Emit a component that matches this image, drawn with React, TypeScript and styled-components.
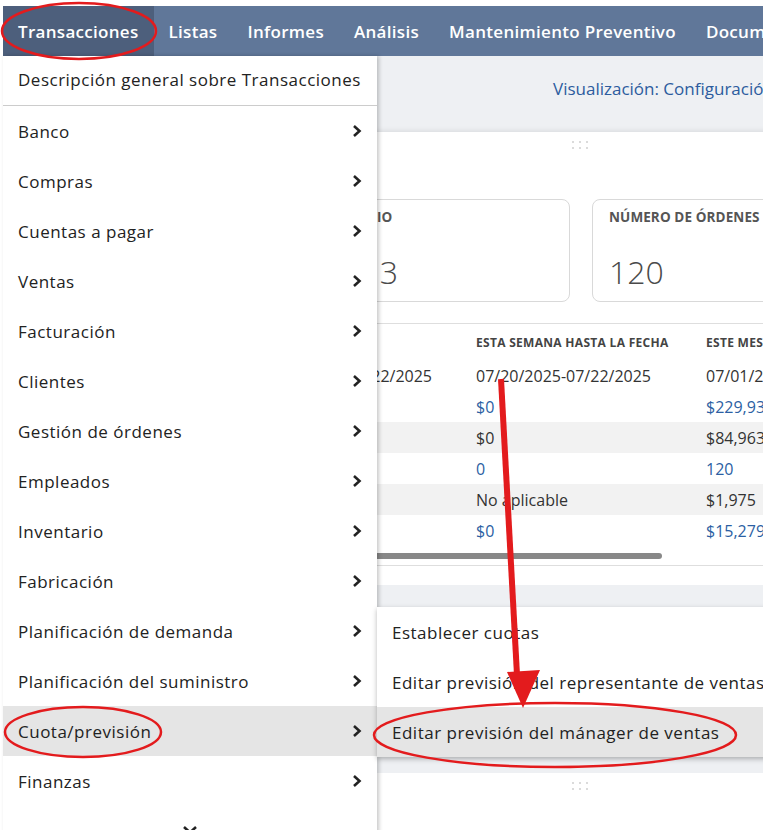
import React from 'react'
import styled, { createGlobalStyle } from 'styled-components'

const GlobalStyle = createGlobalStyle`
  html, body {
    margin: 0;
    padding: 0;
    background: #ffffff;
  }
  body {
    font-family: 'Open Sans', 'Noto Sans', sans-serif;
    color: #222222;
  }
`

const Page = styled.div`
  position: relative;
  width: 763px;
  height: 830px;
  overflow: hidden;
  padding: 6px 0 0 3px;
  box-sizing: border-box;
`

const NavBar = styled.nav`
  display: flex;
  height: 50px;
  width: 1200px;
  background: #607799;
`

const NavItem = styled.div<{ $active?: boolean }>`
  display: flex;
  align-items: center;
  padding: 0 15px;
  color: #ffffff;
  font-size: 17px;
  font-weight: 600;
  letter-spacing: 0.3px;
  white-space: nowrap;
  background: ${(p) => (p.$active ? '#4d5f7c' : 'transparent')};
`

const Content = styled.div`
  width: 1154px;
  background: #eef0f3;
`

const ViewBar = styled.div`
  height: 76px;
  display: flex;
  align-items: center;
  padding: 0 0 12px 550px;
  box-sizing: border-box;
  color: #2c5c9e;
  font-size: 17px;
  white-space: nowrap;
  box-shadow: inset 0 -6px 6px -6px rgba(0, 0, 0, 0.12);
`

const Panel = styled.section`
  background: #ffffff;
  position: relative;
`

const DragHandle = styled.div`
  display: grid;
  grid-template-columns: repeat(3, 2px);
  grid-auto-rows: 2px;
  column-gap: 5px;
  row-gap: 4px;
  justify-content: center;
  padding-top: 9px;
  span {
    background: #cfcfcf;
    border-radius: 1px;
  }
`

const KpiRow = styled.div`
  display: flex;
  gap: 22px;
  padding: 50px 0 21px 298px;
`

const KpiCard = styled.div`
  width: 269px;
  height: 103px;
  box-sizing: border-box;
  border: 1px solid #d9d9d9;
  border-radius: 8px;
  padding: 8px 16px;
  flex-shrink: 0;
`

const KpiLabel = styled.div`
  font-size: 13.5px;
  font-weight: 700;
  letter-spacing: 0.1px;
  color: #555555;
  white-space: nowrap;
`

const KpiValue = styled.div`
  margin-top: 24px;
  font-size: 32px;
  font-weight: 300;
  color: #4a4a4a;
`

const Table = styled.div`
  border-top: 1px solid #dedede;
`

const Row = styled.div<{ $striped?: boolean; $head?: boolean }>`
  display: grid;
  grid-template-columns: 254px 219px 230px 230px;
  height: ${(p) => (p.$head ? '36px' : '31px')};
  align-items: center;
  background: ${(p) => (p.$striped ? '#f2f2f2' : '#ffffff')};
  font-size: ${(p) => (p.$head ? '12px' : '16px')};
  font-weight: ${(p) => (p.$head ? 700 : 400)};
  letter-spacing: ${(p) => (p.$head ? '0.3px' : '0')};
  color: ${(p) => (p.$head ? '#444444' : '#333333')};
  white-space: nowrap;
`

const Cell = styled.div<{ $link?: boolean }>`
  color: ${(p) => (p.$link ? '#2c5fa3' : 'inherit')};
`

const ScrollTrack = styled.div`
  padding: 7px 0 6px 0;
  border-bottom: 1px solid #dedede;
`

const ScrollThumb = styled.div`
  margin-left: 20px;
  width: 639px;
  height: 6px;
  border-radius: 3px;
  background: #888888;
`

const PanelFoot = styled.div`
  height: 19px;
`

const Gap = styled.div`
  height: 188px;
`

const Panel2 = styled(Panel)`
  height: 120px;
`

const Dropdown = styled.div`
  position: absolute;
  top: 56px;
  left: 3px;
  width: 374px;
  height: 800px;
  background: #ffffff;
  box-shadow: 2px 0 4px rgba(0, 0, 0, 0.22);
`

const Overview = styled.div`
  height: 50px;
  display: flex;
  align-items: center;
  padding: 0 0 2px 15px;
  box-sizing: border-box;
  font-size: 17px;
  letter-spacing: 0.5px;
  border-bottom: 1px solid #cccccc;
  white-space: nowrap;
`

const MenuItem = styled.div<{ $hover?: boolean }>`
  height: 50px;
  display: flex;
  align-items: center;
  justify-content: space-between;
  padding: 0 15px 0 15px;
  font-size: 17px;
  letter-spacing: 0.5px;
  white-space: nowrap;
  background: ${(p) => (p.$hover ? '#e5e5e5' : 'transparent')};
`

const MoreIndicator = styled.div`
  display: flex;
  justify-content: center;
  padding-top: 19px;
`

const Flyout = styled.div`
  position: absolute;
  top: 607px;
  left: 377px;
  width: 420px;
  background: #ffffff;
  box-shadow: 0 2px 5px rgba(0, 0, 0, 0.28);
`

const FlyoutItem = styled.div<{ $hover?: boolean }>`
  height: 50px;
  display: flex;
  align-items: center;
  padding-left: 15px;
  font-size: 17px;
  letter-spacing: 0.5px;
  white-space: nowrap;
  background: ${(p) => (p.$hover ? '#e5e5e5' : 'transparent')};
`

const Annotations = styled.svg`
  position: absolute;
  top: 0;
  left: 0;
  pointer-events: none;
`

const Chevron = () => (
  <svg width="10" height="14" viewBox="0 0 10 14">
    <polyline points="2,2 7.5,7 2,12" fill="none" stroke="#222222" strokeWidth="2.6" />
  </svg>
)

const ChevronDown = () => (
  <svg width="16" height="10" viewBox="0 0 16 10">
    <polyline points="2,2 8,7.5 14,2" fill="none" stroke="#222222" strokeWidth="2.6" />
  </svg>
)

const navItems = ['Transacciones', 'Listas', 'Informes', 'Análisis', 'Mantenimiento Preventivo', 'Documentos', 'Configuración']

const menuItems = [
  'Banco',
  'Compras',
  'Cuentas a pagar',
  'Ventas',
  'Facturación',
  'Clientes',
  'Gestión de órdenes',
  'Empleados',
  'Inventario',
  'Fabricación',
  'Planificación de demanda',
  'Planificación del suministro',
  'Cuota/previsión',
  'Finanzas',
]

const rows = [
  { cells: ['07/22/2025-07/22/2025', '07/20/2025-07/22/2025', '07/01/2025-07/22/2025'], link: false },
  { cells: ['$0', '$0', '$229,935'], link: true },
  { cells: ['$0', '$0', '$84,963'], link: false },
  { cells: ['0', '0', '120'], link: true },
  { cells: ['No aplicable', 'No aplicable', '$1,975'], link: false },
  { cells: ['$0', '$0', '$15,279'], link: true },
]

export default function App() {
  return (
    <>
      <GlobalStyle />
      <Page>
        <NavBar>
          {navItems.map((item, i) => (
            <NavItem key={item} $active={i === 0}>
              {item}
            </NavItem>
          ))}
        </NavBar>
        <Content>
          <ViewBar>Visualización: Configuración predeterminada</ViewBar>
          <Panel>
            <DragHandle>
              {Array.from({ length: 6 }).map((_, i) => (
                <span key={i} />
              ))}
            </DragHandle>
            <KpiRow>
              <KpiCard>
                <KpiLabel>PROMEDIO</KpiLabel>
                <KpiValue>1,913</KpiValue>
              </KpiCard>
              <KpiCard>
                <KpiLabel>NÚMERO DE ÓRDENES</KpiLabel>
                <KpiValue>120</KpiValue>
              </KpiCard>
            </KpiRow>
            <Table>
              <Row $head>
                <Cell />
                <Cell>HOY</Cell>
                <Cell>ESTA SEMANA HASTA LA FECHA</Cell>
                <Cell>ESTE MES HASTA LA FECHA</Cell>
              </Row>
              {rows.map((r, i) => (
                <Row key={i} $striped={i === 2 || i === 4}>
                  <Cell />
                  {r.cells.map((c, j) => (
                    <Cell key={j} $link={r.link}>
                      {c}
                    </Cell>
                  ))}
                </Row>
              ))}
              <ScrollTrack>
                <ScrollThumb />
              </ScrollTrack>
            </Table>
            <PanelFoot />
          </Panel>
          <Gap />
          <Panel2>
            <DragHandle>
              {Array.from({ length: 6 }).map((_, i) => (
                <span key={i} />
              ))}
            </DragHandle>
          </Panel2>
        </Content>

        <Dropdown>
          <Overview>Descripción general sobre Transacciones</Overview>
          {menuItems.map((item) => (
            <MenuItem key={item} $hover={item === 'Cuota/previsión'}>
              {item}
              <Chevron />
            </MenuItem>
          ))}
          <MoreIndicator>
            <ChevronDown />
          </MoreIndicator>
        </Dropdown>

        <Flyout>
          <FlyoutItem>Establecer cuotas</FlyoutItem>
          <FlyoutItem>Editar previsión del representante de ventas</FlyoutItem>
          <FlyoutItem $hover>Editar previsión del mánager de ventas</FlyoutItem>
        </Flyout>

        <Annotations width="763" height="830" viewBox="0 0 763 830">
          <g fill="none" stroke="#e31b1d" strokeWidth="2.5">
            <ellipse cx="79" cy="31" rx="77" ry="28" />
            <ellipse cx="83" cy="732" rx="78" ry="25" />
            <ellipse cx="555" cy="735" rx="181" ry="32" />
          </g>
          <line x1="501" y1="379" x2="517" y2="675" stroke="#e31b1d" strokeWidth="6" />
          <polygon points="507,672 540,670 523,708" fill="#e31b1d" />
        </Annotations>
      </Page>
    </>
  )
}
